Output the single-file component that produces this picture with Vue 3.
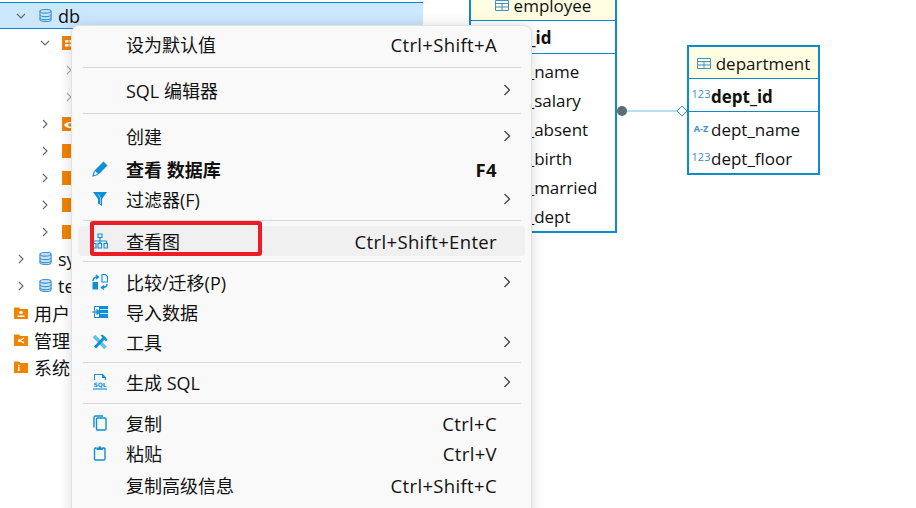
<script setup>
const tree = [
  { label: 'sy', depth: 0, icon: 'db', chev: 'r' },
  { label: 'te', depth: 0, icon: 'db', chev: 'r' },
]
const fieldsEmp = ['emp_name', 'emp_salary', 'emp_absent', 'emp_birth', 'emp_married', 'emp_dept']
const sub = [
  { depth: 1, chev: 'd', kind: 'table' },
  { depth: 2, chev: 'r' },
  { depth: 2, chev: 'r' },
  { depth: 1, chev: 'r', kind: 'view' },
  { depth: 1, chev: 'r', kind: 'folder' },
  { depth: 1, chev: 'r', kind: 'folder' },
  { depth: 1, chev: 'r', kind: 'folder' },
  { depth: 1, chev: 'r', kind: 'folder' },
]
const roots = [
  { label: '用户', kind: 'user' },
  { label: '管理', kind: 'admin' },
  { label: '系统', kind: 'info' },
]
</script>

<template>
  <div class="page">
    <div class="tree">
      <div class="row selected">
        <svg class="chev root-chev" viewBox="0 0 10 10"><path d="M1 3l4 4 4-4" /></svg>
        <svg class="dbicon" viewBox="0 0 14 14"><path d="M1 2.500C1 1.300 3.700.500 7 .500s6 .8 6 2V11.500c0 1.200-2.700 2-6 2s-6-.8-6-2z" /><path d="M1 2.500c0 1.200 2.700 2 6 2s6-.8 6-2M1 6.200c0 1.200 2.700 2 6 2s6-.8 6-2M1 9.500c0 1.200 2.700 2 6 2s6-.8 6-2" /></svg>
        <span class="lbl">db</span>
      </div>
      <div v-for="(s, i) in sub" :key="i" class="row" :class="'d' + s.depth">
        <svg class="chev" :class="{ light: s.depth === 2 }" viewBox="0 0 10 10">
          <path v-if="s.chev === 'd'" d="M1 3l4 4 4-4" />
          <path v-else d="M3 1l4 4-4 4" />
        </svg>
        <svg v-if="s.kind" class="orange" viewBox="0 0 16 16">
          <path d="M0 1h9l2 1.500h5V15H0z" fill="#f08300" />
          <path v-if="s.kind === 'table'" d="M3 5h3.500v2.500H3zM7.500 5H11v2.500H7.500zM3 9h3.500v2.500H3zM7.500 9H11v2.500H7.500z" fill="#fff" />
          <path v-if="s.kind === 'view'" d="M2 9c2-4 10-4 12 0-2 4-10 4-12 0z" fill="#fff" />
          <circle v-if="s.kind === 'view'" cx="8" cy="9" r="1.800" fill="#f08300" />
        </svg>
      </div>
      <div v-for="t in tree" :key="t.label" class="row">
        <svg class="chev root-chev" viewBox="0 0 10 10"><path d="M3 1l4 4-4 4" /></svg>
        <svg class="dbicon" viewBox="0 0 14 14"><path d="M1 2.500C1 1.300 3.700.500 7 .500s6 .8 6 2V11.500c0 1.200-2.700 2-6 2s-6-.8-6-2z" /><path d="M1 2.500c0 1.200 2.700 2 6 2s6-.8 6-2M1 6.200c0 1.200 2.700 2 6 2s6-.8 6-2M1 9.500c0 1.200 2.700 2 6 2s6-.8 6-2" /></svg>
        <span class="lbl">{{ t.label }}</span>
      </div>
      <div v-for="r in roots" :key="r.label" class="row rootrow">
        <svg class="rooticon" viewBox="0 0 14 12">
          <path d="M0 .5h5l1.500 1.500H14V12H0z" fill="#f08300" />
          <circle v-if="r.kind === 'user'" cx="7" cy="5.500" r="1.800" fill="#fff" />
          <rect v-if="r.kind === 'user'" x="3.500" y="8.500" width="7" height="1.500" fill="#fff" />
          <path v-if="r.kind === 'admin'" d="M10 4L6 6.500l4 2.500" stroke="#fff" stroke-width="1.300" fill="none" />
          <circle v-if="r.kind === 'admin'" cx="5.500" cy="6.500" r="1.500" fill="#fff" />
          <rect v-if="r.kind === 'info'" x="4" y="6" width="1.600" height="4" fill="#fff" />
          <rect v-if="r.kind === 'info'" x="4" y="3.800" width="1.600" height="1.400" fill="#fff" />
        </svg>
        <span class="rootlbl">{{ r.label }}</span>
      </div>
    </div>

    <div class="entity employee">
      <div class="head">
        <svg class="tbl" viewBox="0 0 14 11"><path d="M.5.500h13v10H.500zM.500 3.500h13M.500 7h13M7 3.500v7" /></svg>
        <span>employee</span>
      </div>
      <div class="pk emp-pk"><b>emp_id</b></div>
      <div class="fields emp-fields">
        <div v-for="f in fieldsEmp" :key="f" class="field">{{ f }}</div>
      </div>
    </div>

    <div class="entity department">
      <div class="head">
        <svg class="tbl" viewBox="0 0 14 11"><path d="M.5.500h13v10H.500zM.500 3.500h13M.500 7h13M7 3.500v7" /></svg>
        <span>department</span>
      </div>
      <div class="pk"><i class="ty">123</i><b>dept_id</b></div>
      <div class="fields">
        <div class="field"><i class="ty az">A-Z</i>dept_name</div>
        <div class="field"><i class="ty">123</i>dept_floor</div>
      </div>
    </div>

    <svg class="link" viewBox="0 0 80 20">
      <line x1="6" y1="10" x2="61" y2="10" stroke="#6cc0e6" stroke-width="1" />
      <circle cx="6" cy="10" r="5" fill="#5c6a76" />
      <path d="M61 10l5-5 5 5-5 5z" fill="#fff" stroke="#2d9bd6" />
    </svg>

    <div class="menu">
      <div class="mi"><span class="ic"></span><span class="ml">设为默认值</span><span class="sc">Ctrl+Shift+A</span><span class="ar"></span></div>
      <div class="sep s1"></div>
      <div class="mi"><span class="ic"></span><span class="ml">SQL 编辑器</span><span class="ar"><svg viewBox="0 0 8 12"><path d="M1.500 1l5 5-5 5" /></svg></span></div>
      <div class="sep s1"></div>
      <div class="mi gapb"><span class="ic"></span><span class="ml">创建</span><span class="ar"><svg viewBox="0 0 8 12"><path d="M1.500 1l5 5-5 5" /></svg></span></div>
      <div class="mi">
        <span class="ic"><svg viewBox="0 0 16 16"><path class="f" d="M11.500.500l4 4L6.500 13.500l-4-4z" /><path class="s" d="M2.500 10L1 15l5-1.500" /></svg></span>
        <span class="ml bold">查看 数据库</span><span class="sc bold">F4</span><span class="ar"></span>
      </div>
      <div class="mi">
        <span class="ic"><svg viewBox="0 0 16 16"><path class="f" d="M1 1h14l-5 7v7l-4-2.500V8z" /><path d="M6 3l2.500 4v6" stroke="#8ed0f2" fill="none" /></svg></span>
        <span class="ml">过滤器(F)</span><span class="ar"><svg viewBox="0 0 8 12"><path d="M1.500 1l5 5-5 5" /></svg></span>
      </div>
      <div class="sep s2"></div>
      <div class="mi hover">
        <span class="ic"><svg viewBox="0 0 16 16"><path class="s" d="M6 1h4v3.500H6zM8 4.500V8M1.500 8h13M1.500 8v2M8 8v2M14.500 8v2M.500 10.500h3.500v4.500H.500zM6 10.500h3.500v4.500H6zM12 10.500h3.500v4.500H12z" /></svg></span>
        <span class="ml">查看图</span><span class="sc">Ctrl+Shift+Enter</span><span class="ar"></span>
      </div>
      <div class="sep s3"></div>
      <div class="mi">
        <span class="ic"><svg viewBox="0 0 16 16"><path class="s" d="M10 .500h3.500l2 2v5.500H10z" /><path class="s w" d="M1 7c0-3 2-4 5-4M4 1l2.500 2L4 5" /><path class="f" d="M.500 8H6v7.500H.500z" /><path class="s w" d="M15 10c0 2.500-2 3.500-5 3.500M12 11.500l-2.500 2 2.500 2" /></svg></span>
        <span class="ml">比较/迁移(P)</span><span class="ar"><svg viewBox="0 0 8 12"><path d="M1.500 1l5 5-5 5" /></svg></span>
      </div>
      <div class="mi">
        <span class="ic"><svg viewBox="0 0 16 16"><path class="f" d="M2 2h14v12H2z" /><path d="M8 5.500h8M8 9.500h8" stroke="#bfe6f8" stroke-width="1.200" fill="none" /><path d="M3 3h4v3H3zM3 10h4v3H3z" fill="#fff" /><path d="M.500 8H7" stroke="#fff" stroke-width="3" fill="none" /><path class="s w" d="M.500 8h6M4.500 5.500L7 8l-2.500 2.500" /></svg></span>
        <span class="ml">导入数据</span><span class="ar"></span>
      </div>
      <div class="mi">
        <span class="ic"><svg viewBox="0 0 16 16"><path d="M2 2l11.500 12" stroke="#62bdea" stroke-width="3.600" fill="none" /><path d="M13 3L3 13.500" stroke="#0e8fd6" stroke-width="3" fill="none" /><path class="f" d="M8.500 1.500l2-1 5 5-1.500 2z" /></svg></span>
        <span class="ml">工具</span><span class="ar"><svg viewBox="0 0 8 12"><path d="M1.500 1l5 5-5 5" /></svg></span>
      </div>
      <div class="sep s4"></div>
      <div class="mi">
        <span class="ic"><svg viewBox="0 0 16 16"><path class="s" d="M2.500 6V.500h8l3 3V6" /><path class="f" d="M10 .500l3.500 3.500H10z" /><text x="8" y="12.500" text-anchor="middle" class="sqltxt">SQL</text><path class="s" d="M1 15h14" /></svg></span>
        <span class="ml">生成 SQL</span><span class="ar"><svg viewBox="0 0 8 12"><path d="M1.500 1l5 5-5 5" /></svg></span>
      </div>
      <div class="sep s5"></div>
      <div class="mi">
        <span class="ic"><svg viewBox="0 0 16 16"><path class="s w" d="M5.500 3H13a1 1 0 0 1 1 1v10a1 1 0 0 1-1 1H5.500a1 1 0 0 1-1-1V4a1 1 0 0 1 1-1zM2 12.500V2.500A1.500 1.500 0 0 1 3.500 1H11" /></svg></span>
        <span class="ml">复制</span><span class="sc">Ctrl+C</span><span class="ar"></span>
      </div>
      <div class="mi gapb2">
        <span class="ic"><svg viewBox="0 0 16 16"><path class="s w" d="M4.500 3H3.500a1 1 0 0 0-1 1v10a1 1 0 0 0 1 1h8.500a1 1 0 0 0 1-1V4a1 1 0 0 0-1-1h-1" /><path class="f" d="M4.500 2.500h2a1.300 1.300 0 0 1 2.600 0h2V5H4.500z" /></svg></span>
        <span class="ml">粘贴</span><span class="sc">Ctrl+V</span><span class="ar"></span>
      </div>
      <div class="mi"><span class="ic"></span><span class="ml">复制高级信息</span><span class="sc">Ctrl+Shift+C</span><span class="ar"></span></div>
    </div>

    <div class="redbox"></div>
  </div>
</template>

<style>
html, body { margin: 0; background: #fff; }
</style>

<style scoped>
.page {
  position: relative;
  width: 916px;
  height: 508px;
  overflow: hidden;
  background: #fff;
  font-family: "Open Sans", "Noto Sans CJK SC", sans-serif;
  font-size: 17px;
  color: #111;
}
svg { display: block; }
.tree { width: 423px; padding-top: 2px; }
.row { height: 27px; display: flex; align-items: center; box-sizing: border-box; }
.row.selected { background: #cce8ff; border-top: 1px solid #0a84d6; border-bottom: 1px solid #0a84d6; }
.chev { width: 10px; height: 10px; flex: none; }
.chev path { fill: none; stroke: #666; stroke-width: 1.1; }
.chev.light path { stroke: #aaa; }
.root-chev { margin-left: 16px; margin-right: 13px; }
.dbicon { width: 13px; height: 13px; margin-right: 6px; flex: none; }
.dbicon path { fill: #c7e3f5; stroke: #3f95cf; stroke-width: 1.2; }
.dbicon path + path { fill: none; }
.lbl { font-size: 18px; }
.d1 { padding-left: 40px; }
.d1 .chev { margin-right: 12px; }
.d2 { padding-left: 64px; }
.orange { width: 16px; height: 16px; flex: none; }
.rootrow { padding-left: 14px; }
.rooticon { width: 14px; height: 12px; margin-right: 6px; flex: none; }
.rootlbl { font-size: 18px; }

.entity {
  position: absolute;
  box-sizing: border-box;
  border: 2px solid #0d8bcb;
  background: #fff;
}
.employee { left: 469px; top: -12px; width: 148px; height: 245px; }
.department { left: 687px; top: 45px; width: 133px; height: 130px; }
.head {
  background: #fffde2;
  display: flex;
  align-items: center;
  justify-content: center;
  gap: 5px;
  border-bottom: 1px solid #0d8bcb;
  box-sizing: border-box;
}
.employee .head { height: 31px; padding-top: 1px; }
.department .head { height: 32px; padding-top: 1px; }
.tbl { width: 14px; height: 11px; flex: none; }
.tbl path { fill: none; stroke: #3f8fc8; stroke-width: 1; }
.pk { display: flex; align-items: center; height: 33px; border-bottom: 1px solid #0d8bcb; box-sizing: border-box; padding-left: 2px; padding-top: 2px; }
.pk b { font-weight: 700; }
.emp-pk { padding-left: 20px; padding-top: 1px; }
.fields { padding-top: 3px; }
.field { height: 29px; display: flex; align-items: center; padding-left: 2px; }
.emp-fields .field { padding-left: 20px; }
.ty { font-style: normal; font-size: 11px; color: #3f8fc8; width: 20px; flex: none; line-height: 1; margin-top: -5px; text-align: center; }
.az { font-size: 9px; margin-top: -2px; font-weight: 700; }
.link { position: absolute; left: 616px; top: 101px; width: 80px; height: 20px; }

.menu {
  position: absolute;
  left: 71px;
  top: 25px;
  width: 461px;
  height: 500px;
  box-sizing: border-box;
  background: #f9f9f9;
  border: 1px solid #e2e2e2;
  border-radius: 8px;
  box-shadow: 0 0 14px rgba(0, 0, 0, .14);
  padding-top: 3px;
  color: #111;
}
.mi { height: 30px; margin: 0 6px; display: flex; align-items: center; border-radius: 4px; }
.mi.hover { background: #f0f0f0; }
.gapb { margin-bottom: 3px; }
.gapb2 { margin-bottom: 2px; }
.ic { width: 48px; flex: none; padding-left: 14px; box-sizing: border-box; }
.ic svg { width: 16px; height: 16px; }
.ic .f { fill: #0e8fd6; stroke: none; }
.ic .s { fill: none; stroke: #0e8fd6; stroke-width: 1.1; }
.ic .s.w { stroke-width: 1.4; }
.sqltxt { font-family: "DejaVu Sans", sans-serif; font-size: 6px; font-weight: 700; fill: #0e8fd6; }
.ml { flex: 1; font-size: 18px; white-space: pre; }
.sc { white-space: pre; font-size: 18.5px; letter-spacing: .35px; }
.bold { font-weight: 700; }
.ar { width: 28px; flex: none; display: flex; justify-content: flex-end; padding-right: 14px; box-sizing: border-box; }
.ar svg { width: 8px; height: 12px; }
.ar path { fill: none; stroke: #444; stroke-width: 1.3; }
.sep { height: 1px; background: #d8d8d8; margin-left: 11px; margin-right: 10px; }
.s1 { margin-top: 8px; margin-bottom: 7px; }
.s2 { margin-top: 6px; margin-bottom: 5px; }
.s3 { margin-top: 5px; margin-bottom: 5px; }
.s4 { margin-top: 5px; margin-bottom: 4px; }
.s5 { margin-top: 6px; margin-bottom: 4px; }

.redbox {
  position: absolute;
  left: 90px;
  top: 221px;
  width: 172px;
  height: 35px;
  box-sizing: border-box;
  border: 4px solid #ed1c24;
  border-radius: 3px;
}
</style>
